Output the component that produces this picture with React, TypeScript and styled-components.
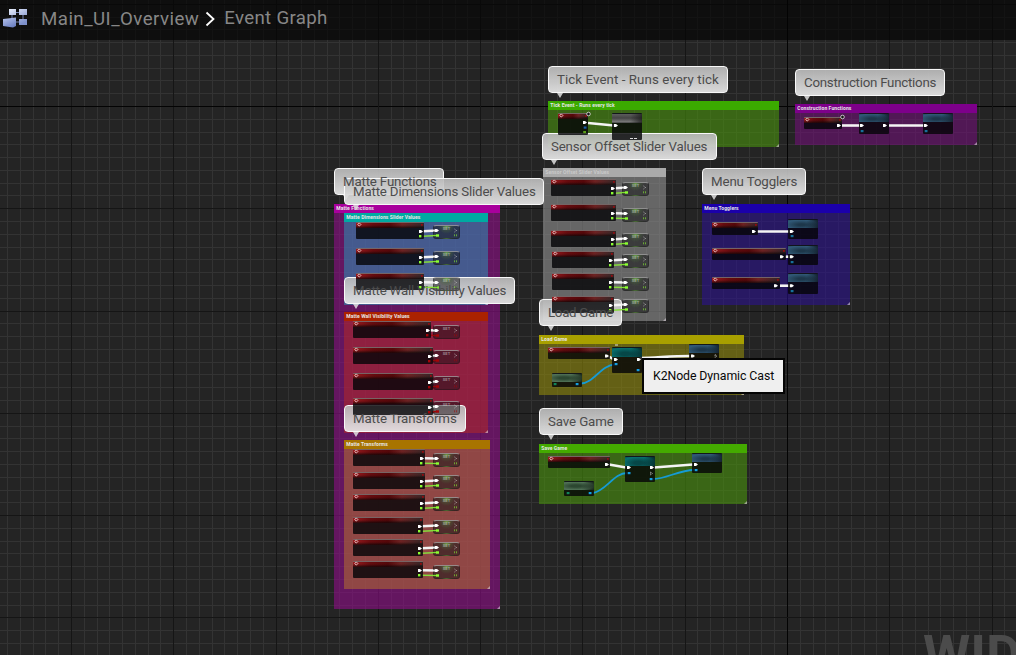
import React from 'react';
import styled, { createGlobalStyle } from 'styled-components';

const GlobalStyle = createGlobalStyle`
  * { box-sizing: border-box; }
  body { margin: 0; background: #242424; overflow: hidden; font-family: Roboto, "Liberation Sans", sans-serif; }
`;

const Editor = styled.main`
  position: relative;
  width: 1016px;
  height: 655px;
  overflow: hidden;
  background: #242424;
`;

const Layer = styled.svg`
  position: absolute;
  inset: 0;
  width: 1016px;
  height: 655px;
`;

const Breadcrumb = styled.header`
  position: relative;
  display: flex;
  align-items: flex-start;
  height: 40px;
  padding-left: 3px;
  background: rgba(5, 5, 5, 0.68);
  color: #878787;
`;

const GraphIcon = styled.svg`
  width: 25px;
  height: 20px;
  margin-top: 8px;
`;

const Crumb = styled.span<{ $gap: number; $top: number; $spacing: number }>`
  margin-left: ${p => p.$gap}px;
  margin-top: ${p => p.$top}px;
  font-size: 18.7px;
  line-height: 22px;
  letter-spacing: ${p => p.$spacing}px;
  white-space: nowrap;
`;

const Chevron = styled.svg`
  flex: none;
  width: 11px;
  height: 16px;
  margin-left: 6px;
  margin-top: 11px;
`;

const Watermark = styled.div`
  position: absolute;
  left: 923px;
  top: 628px;
  font-size: 54px;
  font-weight: 700;
  line-height: 1;
  color: #4b4b4b;
  white-space: nowrap;
`;

const Comment = styled.section<{ $x: number; $y: number; $w: number; $h: number; $body: string }>`
  position: absolute;
  left: ${p => p.$x}px;
  top: ${p => p.$y}px;
  width: ${p => p.$w}px;
  height: ${p => p.$h}px;
  background: rgba(${p => p.$body}, 0.6);
  &::after {
    content: '';
    position: absolute;
    right: 0;
    bottom: 0;
    border-left: 3px solid transparent;
    border-bottom: 3px solid rgba(220, 210, 220, 0.6);
  }
`;

const CommentTitle = styled.h2<{ $color: string; $tone: string }>`
  margin: 0;
  height: 9px;
  padding-left: 2.3px;
  background: ${p => p.$color};
  color: ${p => p.$tone};
  font-size: 5px;
  font-weight: 700;
  line-height: 9.5px;
  letter-spacing: 0.08px;
  white-space: nowrap;
`;

const Bubble = styled.div<{ $x: number; $y: number; $w: number }>`
  position: absolute;
  left: ${p => p.$x}px;
  top: ${p => p.$y}px;
  width: ${p => p.$w}px;
  height: 27px;
  padding-left: 8px;
  border: 1px solid #f8f8f8;
  border-radius: 4px;
  background: linear-gradient(rgba(186, 186, 186, 0.92), rgba(232, 232, 232, 0.92));
  &::after {
    content: '';
    position: absolute;
    left: 8px;
    top: 26px;
    border: 3.5px solid transparent;
    border-bottom-width: 0;
    border-top: 5px solid rgba(225, 225, 225, 0.85);
  }
`;

const BubbleText = styled.span<{ $spacing: number }>`
  position: relative;
  z-index: 1;
  display: block;
  color: #4c4c4c;
  font-size: 13.3px;
  line-height: 25px;
  letter-spacing: ${p => p.$spacing}px;
  white-space: nowrap;
`;

const heads = {
  event: 'linear-gradient(rgba(0,0,0,0) 40%, rgba(8,5,6,.75)), linear-gradient(90deg, #9a1a1e 0%, #650b0e 25%, #540709 50%, #6d2222 68%, rgba(62,46,46,.7) 100%)',
  func: 'linear-gradient(100deg, transparent 60%, rgba(10,16,24,.75)), radial-gradient(ellipse at 45% 60%, #1d374a 15%, #315a78 70%, #1d3a50 110%)',
  cast: 'linear-gradient(100deg, transparent 60%, rgba(4,24,24,.7)), radial-gradient(ellipse at 45% 65%, #064747 20%, #087070 70%, #063535 110%)',
  pure: 'linear-gradient(100deg, transparent 60%, rgba(12,24,14,.7)), radial-gradient(ellipse at 40% 50%, #2c4731 20%, #527358 70%, #1d2f20 110%)',
  tick: 'linear-gradient(100deg, transparent 60%, rgba(20,20,20,.75)), linear-gradient(#5c5c5c, #444 45%, #777 85%, #444)',
};
type Kind = keyof typeof heads;
const headHeight: Record<Kind, number> = { event: 5, func: 8, cast: 9, pure: 8, tick: 9 };

const Node = styled.div<{ $x: number; $y: number; $w: number; $h: number; $kind: Kind }>`
  position: absolute;
  left: ${p => p.$x}px;
  top: ${p => p.$y}px;
  width: ${p => p.$w}px;
  height: ${p => p.$h}px;
  border-radius: 1px;
  background: rgba(5, 5, 7, 0.81);
  border-top: 1px solid ${p => (p.$kind === 'event' ? 'rgba(135,115,115,.85)' : 'rgba(20,25,30,.8)')};
  &::before {
    content: '';
    display: block;
    height: ${p => headHeight[p.$kind]}px;
    background: ${p => heads[p.$kind]};
  }
`;

const SetNode = styled.div<{ $x: number; $y: number; $red: boolean }>`
  position: absolute;
  left: ${p => p.$x}px;
  top: ${p => p.$y}px;
  width: 27px;
  height: 14px;
  border-radius: 3px;
  border: 1px solid rgba(20, 20, 20, 0.35);
  border-top-color: rgba(190, 190, 190, 0.65);
  background: ${p => (p.$red
    ? 'rgba(25,15,20,.5)'
    : 'radial-gradient(ellipse at 50% 0, rgba(120,195,75,.75) 0, rgba(75,110,60,.4) 25%, transparent 48%), rgba(20,20,22,.52)')};
  color: rgba(215, 215, 215, 0.55);
  font-size: 4.2px;
  font-weight: 700;
  line-height: 6px;
  text-align: center;
`;

const Tooltip = styled.div`
  position: absolute;
  z-index: 2;
  left: 642px;
  top: 358px;
  width: 143px;
  height: 36px;
  border: 2px solid #050505;
  background: #efefef;
  color: #080808;
  padding-left: 9px;
  font-size: 12.3px;
  line-height: 32px;
  letter-spacing: -0.08px;
  white-space: nowrap;
`;

const comments = [
  { t: 'Tick Event - Runs every tick', x: 548, y: 101, w: 231, h: 46, c: '#3baa00', b: '73,146,14' },
  { t: 'Construction Functions', x: 795, y: 104, w: 182, h: 41, c: '#7d008a', b: '111,16,118' },
  { t: 'Matte Functions', x: 334, y: 204, w: 166, h: 405, c: '#a8009c', b: '144,14,136' },
  { t: 'Matte Dimensions Slider Values', x: 344, y: 213, w: 144, h: 92, c: '#00aaa2', b: '49,136,174' },
  { t: 'Matte Wall Visibility Values', x: 344, y: 312, w: 144, h: 121, c: '#ab2200', b: '171,40,43' },
  { t: 'Matte Transforms', x: 344, y: 440, w: 146, h: 149, c: '#a87400', b: '173,105,51' },
  { t: 'Sensor Offset Slider Values', x: 543, y: 168, w: 123, h: 153, c: '#aaaaaa', b: '146,146,146' },
  { t: 'Menu Togglers', x: 702, y: 204, w: 148, h: 101, c: '#1b00aa', b: '43,19,141' },
  { t: 'Load Game', x: 539, y: 335, w: 205, h: 60, c: '#a8a000', b: '143,136,11' },
  { t: 'Save Game', x: 539, y: 444, w: 208, h: 60, c: '#44aa00', b: '73,146,14' },
];

// Callout above each comment: text, x, y, width, letter spacing
const bubbles: [string, number, number, number, number][] = [
  ['Tick Event - Runs every tick', 548, 66, 180, 0.07],
  ['Construction Functions', 795, 69, 150, -0.25],
  ['Sensor Offset Slider Values', 542, 133, 175, -0.18],
  ['Matte Functions', 334, 168, 110, -0.17],
  ['Matte Dimensions Slider Values', 344, 178, 200, -0.17],
  ['Matte Wall Visibility Values', 344, 277, 171, -0.22],
  ['Matte Transforms', 344, 405, 122, -0.15],
  ['Load Game', 539, 299, 83, -0.3],
  ['Save Game', 539, 408, 84, -0.12],
  ['Menu Togglers', 702, 168, 104, -0.13],
];

// Event node paired with a variable setter: x, y, width, setter x, setter y, boolean variable
const setters: [number, number, number, number, number, boolean][] = [
  [356, 222, 68, 433, 225, false], [356, 248, 68, 433, 251, false], [356, 273, 68, 433, 277, false],
  [353, 321, 78, 433, 325, true], [353, 347, 80, 433, 350, true], [353, 373, 80, 433, 376, true], [353, 398, 80, 433, 401, true],
  [353, 449, 72, 433, 453, false], [353, 472, 72, 433, 475, false], [353, 494, 72, 433, 497, false],
  [353, 517, 70, 433, 520, false], [353, 539, 70, 433, 542, false], [353, 561, 70, 433, 565, false],
  [551, 179, 65, 622, 182, false], [551, 204, 65, 622, 208, false], [551, 230, 65, 622, 233, false],
  [552, 251, 62, 622, 254, false], [552, 273, 62, 622, 277, false], [552, 296, 62, 622, 299, false],
];

const nodes: [number, number, number, number, Kind][] = [
  [712, 222, 46, 13, 'event'], [712, 248, 74, 12, 'event'], [712, 277, 68, 12, 'event'],
  [788, 219, 30, 20, 'func'], [788, 245, 30, 20, 'func'], [788, 273, 30, 21, 'func'],
  [558, 113, 30, 22, 'event'], [612, 113, 30, 27, 'tick'],
  [804, 117, 38, 12, 'event'], [859, 113, 30, 21, 'func'], [923, 113, 30, 21, 'func'],
  [548, 347, 62, 12, 'event'], [612, 347, 30, 26, 'cast'], [689, 344, 30, 21, 'func'], [552, 373, 30, 14, 'pure'],
  [548, 456, 62, 12, 'event'], [625, 456, 30, 26, 'cast'], [692, 453, 30, 20, 'func'], [564, 481, 30, 15, 'pure'],
];

const execWires = [
  'M588 123 L614 125.5', 'M842 125.5 H861', 'M889 125.5 H925',
  'M757 231.5 H790', 'M785 256.7 H790', 'M780 285.7 H790',
  'M609 356.5 L613 359', 'M640 358 C655 358 670 356 690 356',
  'M609 464.5 L626 467.5', 'M654 467.5 L693 464.5',
];
const objectWires = [
  'M581 383.5 C594 383 601 365 615 364.5',
  'M593 493 C606 491 614 473 627 473',
  'M653 479 C666 479 679 470 694 470',
];
const execPins: [number, number][] = [
  [585, 122.5], [616, 125.5], [839, 125.5], [862, 125.5], [885, 125.5], [926, 125.5],
  [754, 231.5], [782, 256.7], [776, 285.7], [792, 231.5], [792, 256.7], [792, 285.7],
  [607, 356], [616, 359.5], [639, 359.5], [693, 356],
  [607, 464.5], [629, 467.5], [652, 467.5], [696, 464.5],
];
const dataPins: [number, number, string][] = [
  [585, 127.5, '#185fa8'], [584.5, 132, '#5a9e16'], [862, 131, '#16719b'], [926, 131, '#16719b'],
  [792, 236, '#16719b'], [792, 262, '#16719b'], [792, 291, '#16719b'],
  [616, 364, '#159ee0'], [638, 370, '#159ee0'], [577, 384, '#159ee0'], [555, 384, '#12855b'],
  [629, 473, '#159ee0'], [651, 479, '#159ee0'], [696, 470, '#159ee0'], [590, 493, '#159ee0'], [568, 493, '#12855b'],
];

const Pin = ({ x, y, c = '#fff' }: { x: number; y: number; c?: string }) => (
  <path d={`M${x - 2} ${y - 1.5} h2 l2 1.5 l-2 1.5 h-2z`} fill={c} />
);

function GridLines() {
  const lines: React.ReactNode[] = [];
  const pass = (major: boolean) => {
    for (let i = -8; i < 84; i++) {
      if ((i % 8 === 0) !== major) continue;
      const x = Math.round(71 + i * 12.785);
      const y = Math.round(106 + (i - 16) * 12.785);
      lines.push(<rect key={`x${i}`} x={x} y={0} width={1} height={655} fill={!major ? '#333333' : i === 56 ? '#030303' : '#151515'} />);
      lines.push(<rect key={`y${i}`} x={0} y={y} width={1016} height={1} fill={!major ? '#333333' : i === 16 ? '#030303' : '#151515'} />);
    }
  };
  pass(false);
  pass(true);
  return <Layer>{lines}</Layer>;
}

function Wires() {
  return (
    <Layer fill="none">
      {objectWires.map(d => <path key={d} d={d} stroke="#159bd5" strokeWidth={1.8} />)}
      {execWires.map(d => <path key={d} d={d} stroke="#f4f4f4" strokeWidth={2.6} />)}
      {setters.map(([x, y, w, sx, sy, red]) => (
        <g key={`${x}-${y}`}>
          <path d={`M${x + w - 1} ${y + 9.3} L${sx + 4} ${sy + 5.5}`} stroke="#f4f4f4" strokeWidth={2.6} />
          <path d={`M${x + w - 1} ${y + 14.2} L${sx + 4} ${sy + 10.5}`} stroke={red ? '#a30a12' : '#86dc3c'} strokeWidth={1.5} />
        </g>
      ))}
    </Layer>
  );
}

const EventMarks = ({ x, y, w }: { x: number; y: number; w: number }) => (
  <g>
    <path d={`M${x + 1.7} ${y + 2.5} l1.6 -1.6 l1.6 1.6 l-1.6 1.6z`} stroke="#efd5d5" strokeWidth={0.9} />
    <rect x={x + w - 3} y={y + 2} width={1.8} height={1.8} fill="#920c10" />
  </g>
);

function Pins() {
  return (
    <Layer fill="none">
      {setters.map(([x, y, w, sx, sy, red]) => {
        const c = red ? '#a30508' : '#8cff32';
        return (
          <g key={`${x}-${y}`}>
            <Pin x={x + w - 3} y={y + 9.5} />
            <rect x={x + w - 5} y={y + 13} width={2.4} height={2.4} fill={c} />
            <path d={`M${sx} ${sy + 5.6} H${sx + 4}`} stroke="#e8e8e8" strokeWidth={1.8} />
            <path d={`M${sx} ${sy + 10.5} H${sx + 4}`} stroke={c} strokeWidth={1.2} opacity={0.8} />
            <Pin x={sx + 4} y={sy + 5.5} />
            <rect x={sx + 3} y={sy + 9.3} width={3} height={2.4} fill={c} />
            <path d={`M${sx + 21.5} ${sy + 4} l2 1.5 l-2 1.5`} stroke="#c9c9c9" strokeWidth={0.8} strokeDasharray="1.2 .8" />
            <path d={`M${sx + 21.5} ${sy + 9.3} v2 M${sx + 23.5} ${sy + 9.3} v2`} stroke={c} strokeWidth={0.8} opacity={0.7} />
          </g>
        );
      })}
      {setters.map(([x, y, w]) => <EventMarks key={`${x}-${y}m`} x={x} y={y} w={w} />)}
      {nodes.filter(n => n[4] === 'event').map(([x, y, w]) => <EventMarks key={`${x}-${y}e`} x={x} y={y} w={w} />)}
      {execPins.map(([x, y]) => <Pin key={`${x}-${y}`} x={x} y={y} />)}
      {dataPins.map(([x, y, c]) => <rect key={`${x}-${y}`} x={x - 1.3} y={y - 1} width={2.8} height={2.2} fill={c} />)}
      <path d="M715 354.5 l2 1.5 l-2 1.5z M650.5 472 l2 1.5 l-2 1.5z" stroke="#c0c0c0" strokeWidth={0.7} strokeDasharray="1.5 .6" />
      <path d="M630 138.5 h3 M634 138.5 h3 M615 345 h3" stroke="#ddd" strokeWidth={1.2} />
      <g fill="#111" stroke="#e8e8e8" strokeWidth={0.8}>
        <circle cx={588.5} cy={114} r={1.8} />
        <circle cx={842.5} cy={117} r={1.8} />
      </g>
    </Layer>
  );
}

export default function App() {
  return (
    <Editor>
      <GlobalStyle />
      <GridLines />
      <Watermark>WIDGET BLUEPRINT</Watermark>
      {comments.map(c => (
        <Comment key={c.t} $x={c.x} $y={c.y} $w={c.w} $h={c.h} $body={c.b}>
          <CommentTitle $color={c.c} $tone={c.c === '#aaaaaa' ? '#c9c9c9' : '#e6e6e6'}>{c.t}</CommentTitle>
        </Comment>
      ))}
      {bubbles.map(([t, x, y, w, s]) => (
        <Bubble key={t} $x={x} $y={y} $w={w}>
          <BubbleText $spacing={s}>{t}</BubbleText>
        </Bubble>
      ))}
      <Wires />
      {setters.map(([x, y, w, sx, sy, red]) => (
        <React.Fragment key={`${x}-${y}`}>
          <Node $x={x} $y={y} $w={w} $h={17} $kind="event" />
          <SetNode $x={sx} $y={sy} $red={red}>SET</SetNode>
        </React.Fragment>
      ))}
      {nodes.map(([x, y, w, h, k]) => <Node key={`${x}-${y}`} $x={x} $y={y} $w={w} $h={h} $kind={k} />)}
      <Pins />
      <Breadcrumb>
        <GraphIcon viewBox="0 0 25 20">
          <defs>
            <linearGradient id="tile" x1="0" y1="0" x2="0.6" y2="1">
              <stop offset="0" stopColor="#e6ecfb" />
              <stop offset="1" stopColor="#7d90cb" />
            </linearGradient>
            <linearGradient id="base" x1="0" y1="0" x2="0.6" y2="1">
              <stop offset="0" stopColor="#b9c6ee" />
              <stop offset="1" stopColor="#6f83c4" />
            </linearGradient>
          </defs>
          <path d="M12 4.500 H18 M9 7 V12 M20 7 V12 M12 14 H18" stroke="#7785b2" strokeWidth="1" />
          <path d="M6 1h7v6H6z M16 1h8v6h-8z M16 11h8v6h-8z" fill="url(#tile)" />
          <path d="M0 11l13-1.500v8.500l-3 1.500L0 18z" fill="url(#base)" />
        </GraphIcon>
        <Crumb $gap={13} $top={8} $spacing={0.45}>Main_UI_Overview</Crumb>
        <Chevron viewBox="0 0 11 16" fill="none">
          <path d="M1.5 1.500 L8.500 8 L1.500 14.500" stroke="#fff" strokeWidth="1.8" />
        </Chevron>
        <Crumb $gap={8} $top={7} $spacing={0.3}>Event Graph</Crumb>
      </Breadcrumb>
      <Tooltip>K2Node Dynamic Cast</Tooltip>
    </Editor>
  );
}
